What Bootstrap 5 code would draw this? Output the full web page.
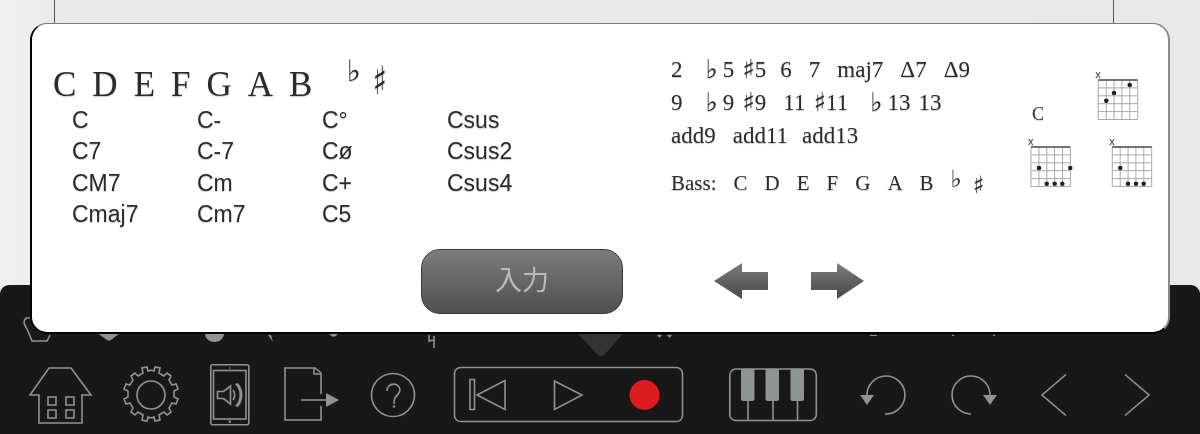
<!DOCTYPE html>
<html lang="ja">
<head>
<meta charset="UTF-8">
<title>Chord input</title>
<link href="https://cdn.jsdelivr.net/npm/bootstrap@5.3.0/dist/css/bootstrap.min.css" rel="stylesheet">
<style>
html, body { margin: 0; height: 434px; overflow: hidden; background: #e8e8e8; }
.stage { position: relative; width: 1200px; height: 434px; background: linear-gradient(90deg, #f1f1f1 0, #e9e9e9 60px, #e8e8e8 100%); filter: blur(.35px); }
.staff-lines { height: 285px; margin: 0 86px 0 54px; }
.staff-lines > div { height: 24px; border-left: 1px solid #555; border-right: 1px solid #555; }
.dock { height: 149px; background: #181818; border-radius: 9px 9px 0 0; }
.dock svg { display: block; }
.dock-icons { padding-left: 14px; }
.ico { fill: none; stroke: #8f9495; stroke-width: 1.6; }
.ico-fill { fill: #8f9495; stroke: none; }

.chord-panel { position: absolute; left: 30px; top: 23px; width: 1140px; height: 311px; background: #fff; border-style: solid; border-color: #777 #8a8a8a #000 #000; border-width: 1px 2px 2px 2px; border-radius: 17px; color: #2b2b2b; text-shadow: 0 1px 1px rgba(0,0,0,.22); }
.panel-top { height: 225px; }
.panel-left { width: 639px; padding: 41px 0 0 21px; }
.notes { font: 35px/40px "Liberation Serif", serif; gap: 16px; height: 40px; }
.notes-flat { font: 30px/30px "DejaVu Sans", sans-serif; margin: -9px 0 0 18px; }
.notes-sharp { font: 700 30px/30px "DejaVu Sans", sans-serif; margin: 2px 0 0 -4px; transform: scaleY(1.3); }
.chords { display: grid; grid-template-columns: repeat(4, 125px); grid-auto-rows: 31.3px; margin: 0 0 0 19px; font: 23px/31px "Liberation Sans", sans-serif; }
.panel-mid { width: 349px; padding-top: 29px; font: 23px/33px "Liberation Serif", serif; }
.degree-row { gap: 17px; height: 33px; white-space: nowrap; }
.acc { font-family: "DejaVu Sans", sans-serif; font-size: 26px; line-height: 0; vertical-align: -1px; }
.acc-flat { margin-right: 5px; }
.flat-item { margin-left: 6px; }
.flat-near { margin-left: 5px; }
.sharp-item { margin-left: -9px; }
.pull-back { margin-left: -3px; }
.bass-row { gap: 17px; margin-top: 17px; font-size: 21px; line-height: 28px; height: 28px; }
.bass-row .acc { font-size: 24px; line-height: 28px; }
.bass-row .acc-flat { margin: -4px -6px 0 0; }
.bass-row .acc-sharp { margin: 2px 0 0 0; font-weight: 700; }
.chart-svg { display: block; margin-top: 42px; }
.chart-svg .fret { fill: none; stroke: #a9a9a9; stroke-width: 1; }
.chart-svg .nut { stroke: #555; stroke-width: 1.4; }
.chart-svg circle { fill: #222; }
.chart-svg text { font: 18px "Liberation Serif", serif; fill: #333; }
.chart-svg .mute { font: 11px "Liberation Sans", sans-serif; fill: #444; }
.panel-bottom { padding-left: 389px; gap: 91px; }
.enter-btn { width: 202px; height: 65px; border: 1px solid #3a3a3a; border-radius: 19px; background: linear-gradient(180deg, #7c7c7c, #4f4f4f); color: #bbb; font: 27px/1 "Noto Sans CJK JP", sans-serif; padding: 0 0 6px; text-shadow: none; }
.enter-btn:hover { background: linear-gradient(180deg, #7c7c7c, #4f4f4f); color: #bbb; border-color: #3a3a3a; }
.arrow-pair { gap: 41px; margin-bottom: 2px; }
</style>
</head>
<body>
<div class="stage">
  <div class="staff-lines"><div></div></div>

  <div class="dock">
    <!-- what shows of the palette row behind the panel -->
    <svg width="1200" height="77" viewBox="0 285 1200 77">
      <path class="ico" d="M30 318c-3-1-6 1-6 4 0 4 3 6 4 9l4 10h15l3-6"/>
      <path class="ico-fill" d="M97 333h23l-9 7q-2 1-4 0z"/>
      <path class="ico-fill" d="M205 333h19c0 12-19 12-19 0z"/>
      <path class="ico-fill" d="M268 335l5 7-2-7z"/>
      <path class="ico-fill" d="M329 333h9c-2 5-7 5-9 0z"/>
      <path class="ico" d="M429 335v6l5-1M434 336v12"/>
      <path d="M578 334h45l-18 20q-4 4-8 0z" fill="#333"/>
      <path class="ico-fill" d="M657 335h5l-2.500 3zM667 335h5l-2.500 3z"/>
      <path class="ico-fill" d="M870 335h7v1h-7zM952 335h2v1h-2zM993 335h2v1h-2z"/>
    </svg>
    <div class="dock-icons d-flex">
      <svg width="92" height="72" viewBox="14 362 92 72">
        <path class="ico" d="M49 368h22l20 27h-9v28H39v-28h-9z"/>
        <path class="ico" d="M48 397h8v8h-8zM66 397h8v8h-8zM48 410h8v8h-8zM66 410h8v8h-8z"/>
      </svg>
      <svg width="89" height="72" viewBox="106 362 89 72">
        <circle class="ico" cx="151" cy="395" r="14"/>
        <path class="ico" d="M147 367l1 4c2-1 4-1 6 0l1-4 5 1-1 5c2 1 3 2 5 3l3-3 4 3-2 4c1 2 2 3 3 5l4-1 2 5-4 2v6l4 2-2 5-4-1c-1 2-2 3-3 5l2 4-4 3-3-3c-2 1-3 2-5 3l1 5-5 1-1-4c-2 1-4 1-6 0l-1 4-5-1 1-5c-2-1-3-2-5-3l-3 3-4-3 2-4c-1-2-2-3-3-5l-4 1-2-5 4-2v-6l-4-2 2-5 4 1c1-2 2-3 3-5l-2-4 4-3 3 3c2-1 3-2 5-3l-1-5z"/>
      </svg>
      <svg width="69" height="72" viewBox="195 362 69 72">
        <rect class="ico" x="210.800" y="364.800" width="38" height="60" rx="2"/>
        <rect class="ico" x="213.500" y="370.500" width="32.500" height="48.500"/>
        <circle class="ico-fill" cx="229.800" cy="421.800" r="1.300"/>
        <circle class="ico-fill" cx="229.800" cy="368" r=".7"/>
        <path class="ico" d="M217.500 391.500h6l7-5.500v18l-7-5.500h-6z"/>
        <path class="ico" stroke-width="2" d="M233 390c2 3 2 7 0 10"/>
        <path class="ico-fill" d="M235 384c6 6 6 16 0 22l3 1c6-7 6-17 0-24z"/>
      </svg>
      <svg width="91" height="72" viewBox="264 362 91 72">
        <path class="ico" d="M321 394v-21l-6-5h-30v52h36v-14"/>
        <path class="ico" d="M314 368v6h7"/>
        <path class="ico" d="M301 400h26"/>
        <path class="ico-fill" d="M326 393l13 7-13 7z"/>
      </svg>
      <svg width="80" height="72" viewBox="355 362 80 72">
        <circle class="ico" cx="393" cy="395" r="21.500"/>
        <path class="ico" d="M387 391c0-9 13-9 13-1 0 5-6 5-6 12v2"/>
        <circle class="ico-fill" cx="394" cy="406.500" r="1.300"/>
      </svg>
      <svg width="271" height="72" viewBox="435 362 271 72">
        <rect class="ico" x="454.500" y="367.500" width="228" height="54" rx="6"/>
        <path class="ico" d="M470 379.500h4.500v30H470z"/>
        <path class="ico" d="M505 380.500v29l-28-14.500z"/>
        <path class="ico" d="M554.500 381v28.500l27.500-14.500z"/>
        <circle cx="644.500" cy="395" r="15" fill="#dc1c20"/>
      </svg>
      <svg width="132" height="72" viewBox="706 362 132 72">
        <rect class="ico" x="729.800" y="369" width="86.500" height="51.500" rx="6"/>
        <path class="ico" d="M748 400v20M773 400v20M797.500 400v20"/>
        <path class="ico-fill" d="M741 369h13.500v30q0 2-2 2h-9.500q-2 0-2-2zM765.500 369h13.500v30q0 2-2 2h-9.500q-2 0-2-2zM790.500 369h13.500v30q0 2-2 2h-9.500q-2 0-2-2z"/>
      </svg>
      <svg width="90" height="72" viewBox="838 362 90 72">
        <path class="ico" d="M867 396A19 19 0 1 1 885 414"/>
        <path class="ico-fill" d="M860 395h14l-7 10z"/>
      </svg>
      <svg width="91" height="72" viewBox="928 362 91 72">
        <path class="ico" d="M990 396A19 19 0 1 0 971 414"/>
        <path class="ico-fill" d="M983 395h14l-7 10z"/>
      </svg>
      <svg width="76" height="72" viewBox="1019 362 76 72">
        <path class="ico" d="M1066 374.500l-24 20.500 24 20.500"/>
      </svg>
      <svg width="91" height="72" viewBox="1095 362 91 72">
        <path class="ico" d="M1125 374.500l24 20.500-24 20.500"/>
      </svg>
    </div>
  </div>

  <div class="chord-panel">
    <div class="panel-top d-flex">
      <div class="panel-left">
        <div class="notes d-flex">
          <span>C</span><span>D</span><span>E</span><span>F</span><span>G</span><span>A</span><span>B</span>
          <span class="notes-flat">♭</span><span class="notes-sharp">♯</span>
        </div>
        <div class="chords">
          <span>C</span><span>C-</span><span>C°</span><span>Csus</span>
          <span>C7</span><span>C-7</span><span>Cø</span><span>Csus2</span>
          <span>CM7</span><span>Cm</span><span>C+</span><span>Csus4</span>
          <span>Cmaj7</span><span>Cm7</span><span>C5</span><span></span>
        </div>
      </div>
      <div class="panel-mid">
        <div class="degree-row d-flex">
          <span>2</span><span class="flat-item"><span class="acc acc-flat">♭</span>5</span><span class="sharp-item"><span class="acc">♯</span>5</span><span class="pull-back">6</span><span>7</span><span>maj7</span><span>Δ7</span><span>Δ9</span>
        </div>
        <div class="degree-row d-flex">
          <span>9</span><span class="flat-item"><span class="acc acc-flat">♭</span>9</span><span class="sharp-item"><span class="acc">♯</span>9</span><span>11</span><span class="sharp-item"><span class="acc">♯</span>11</span><span class="flat-near"><span class="acc acc-flat">♭</span>13</span><span class="sharp-item">13</span>
        </div>
        <div class="degree-row d-flex">
          <span>add9</span><span>add11</span><span class="pull-back">add13</span>
        </div>
        <div class="bass-row d-flex">
          <span>Bass:</span>
          <span>C</span><span>D</span><span>E</span><span>F</span><span>G</span><span>A</span><span>B</span><span class="acc acc-flat">♭</span><span class="acc acc-sharp">♯</span>
        </div>
      </div>
      <svg class="chart-svg" width="140" height="130" viewBox="1020 66 140 130">
        <defs>
          <g id="fretboard">
            <path class="fret" d="M0 0h39.400v39.500H0zM0 7.900h39.400M0 15.800h39.400M0 23.700h39.400M0 31.600h39.400M7.900 0v39.500M15.800 0v39.500M23.600 0v39.500M31.500 0v39.500"/>
            <path class="nut" d="M0 0h39.400"/>
            <text class="mute" x="-3" y="-2">x</text>
          </g>
        </defs>
        <text x="1032" y="120">C</text>
        <use href="#fretboard" x="1098.300" y="80"/>
        <circle cx="1129.700" cy="85" r="2.300"/><circle cx="1114" cy="93" r="2.300"/><circle cx="1106.300" cy="100.700" r="2.300"/>
        <use href="#fretboard" x="1031" y="147"/>
        <circle cx="1039" cy="168" r="2.300"/><circle cx="1070.300" cy="168" r="2.300"/><circle cx="1046.700" cy="183.700" r="2.300"/><circle cx="1054.700" cy="183.700" r="2.300"/><circle cx="1062.300" cy="183.700" r="2.300"/>
        <use href="#fretboard" x="1112.300" y="147"/>
        <circle cx="1120.300" cy="168" r="2.300"/><circle cx="1128" cy="183.700" r="2.300"/><circle cx="1136" cy="183.700" r="2.300"/><circle cx="1143.700" cy="183.700" r="2.300"/>
      </svg>
    </div>
    <div class="panel-bottom d-flex align-items-center">
      <button type="button" class="btn enter-btn">入力</button>
      <div class="arrow-pair d-flex">
        <svg width="55" height="38" viewBox="714 261 55 38">
          <defs><linearGradient id="arrowShade" x1="0" y1="0" x2="0" y2="1"><stop offset="0" stop-color="#7b7b7b"/><stop offset="1" stop-color="#484848"/></linearGradient></defs>
          <path fill="url(#arrowShade)" d="M714 280l28-18v9h26v18h-26v9z"/>
        </svg>
        <svg width="55" height="38" viewBox="810 261 55 38">
          <path fill="url(#arrowShade)" d="M864 280l-27-18v9h-26v18h26v9z"/>
        </svg>
      </div>
    </div>
  </div>
</div>
<script src="https://cdn.jsdelivr.net/npm/bootstrap@5.3.0/dist/js/bootstrap.bundle.min.js"></script>
</body>
</html>
